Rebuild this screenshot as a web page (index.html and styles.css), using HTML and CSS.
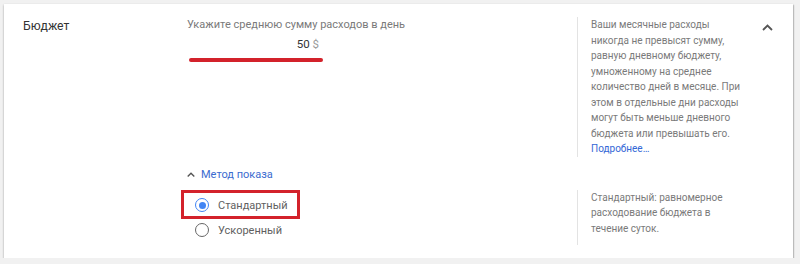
FILE: index.html
```html
<!DOCTYPE html>
<html lang="ru">
<head>
<meta charset="UTF-8">
<meta name="viewport" content="width=device-width, initial-scale=1.0">
<title>Бюджет</title>
<link rel="stylesheet" href="styles.css">
</head>
<body>
<div class="card">
  <div class="row top">
    <div class="label">Бюджет</div>
    <div class="main">
      <div class="hint">Укажите среднюю сумму расходов в день</div>
      <div class="amount"><span class="num">50</span> <span class="cur">$</span></div>
      <div class="mark-line"></div>
    </div>
    <div class="help">
      Ваши месячные расходы никогда не превысят сумму, равную дневному бюджету, умноженному на среднее количество дней в месяце. При этом в отдельные дни расходы могут быть меньше дневного бюджета или превышать его.
      <a href="#" class="more">Подробнее…</a>
    </div>
    <div class="toggle">
      <svg width="11" height="7" viewBox="0 0 11 7"><path d="M1 6 L5.5 1.5 L10 6" fill="none" stroke="#555" stroke-width="1.8"/></svg>
    </div>
  </div>

  <div class="row method">
    <div></div>
    <div class="main">
      <a href="#" class="method-head">
        <svg width="8" height="5" viewBox="0 0 8 5"><path d="M0.7 4.5 L4 1.2 L7.3 4.5" fill="none" stroke="#555" stroke-width="1.4"/></svg>
        Метод показа
      </a>
    </div>
  </div>

  <div class="row bottom">
    <div></div>
    <div class="main radios">
      <label class="option selected">
        <span class="radio"></span>
        Стандартный
        <span class="mark-box"></span>
      </label>
      <label class="option">
        <span class="radio"></span>
        Ускоренный
      </label>
    </div>
    <div class="help short">
      Стандартный: равномерное расходование бюджета в течение суток.
    </div>
  </div>
</div>
</body>
</html>
```

FILE: styles.css
```css
body {
  margin: 0;
  padding: 0;
  background-color: #f1f1f1;
  font-family: Roboto, "Noto Sans", Arial, sans-serif;
}
.card {
  margin: 4px 0 0 4px;
  width: 789px;
  height: 254px;
  box-sizing: border-box;
  padding: 13px 0 0 19px;
  background-color: #fff;
  box-shadow: 0 1px 2px rgba(0, 0, 0, 0.35), 1px 1px 1px rgba(0, 0, 0, 0.12);
}
.row {
  display: grid;
  grid-template-columns: 164px 390px 172px 44px;
  align-items: start;
}
.label {
  font-size: 12.2px;
  line-height: 18px;
  color: #333;
}
.hint {
  font-size: 11px;
  line-height: 15px;
  color: #7a7a7a;
}
.amount {
  width: 132px;
  margin-top: 4px;
  text-align: right;
  font-size: 11.5px;
  line-height: 16px;
  color: #333;
}
.amount .cur {
  color: #9a9a9a;
}
.mark-line {
  width: 134px;
  height: 4px;
  margin: 6px 0 0 2px;
  border-radius: 2px;
  background-color: #d3222b;
}
.help {
  border-left: 1px solid #e3e3e3;
  padding: 0 7px 0 13px;
  font-size: 10px;
  line-height: 15.5px;
  color: #7a7a7a;
}
.help .more {
  display: block;
  color: #3367d6;
  text-decoration: none;
}
.help.short {
  padding-right: 18px;
  padding-bottom: 9px;
}
.toggle {
  padding: 7px 0 0 13px;
}
.toggle svg {
  display: block;
}
.method .main {
  padding: 10px 0 7px 0;
}
.method-head {
  display: flex;
  align-items: center;
  gap: 6px;
  font-size: 11px;
  line-height: 16px;
  color: #3b6bcf;
  text-decoration: none;
}
.radios {
  padding-top: 3px;
}
.option {
  position: relative;
  display: flex;
  align-items: center;
  gap: 9px;
  height: 25px;
  padding-left: 8px;
  font-size: 11px;
  color: #5f5f5f;
}
.radio {
  width: 14px;
  height: 14px;
  box-sizing: border-box;
  border: 1.6px solid #666;
  border-radius: 50%;
  display: flex;
  align-items: center;
  justify-content: center;
}
.option.selected .radio {
  border-color: #4285f4;
}
.option.selected .radio::after {
  content: "";
  width: 7px;
  height: 7px;
  border-radius: 50%;
  background-color: #4285f4;
}
.mark-box {
  position: absolute;
  left: -6px;
  top: -2.5px;
  width: 119px;
  height: 29px;
  box-sizing: border-box;
  border: 3px solid #d3222b;
}
```
